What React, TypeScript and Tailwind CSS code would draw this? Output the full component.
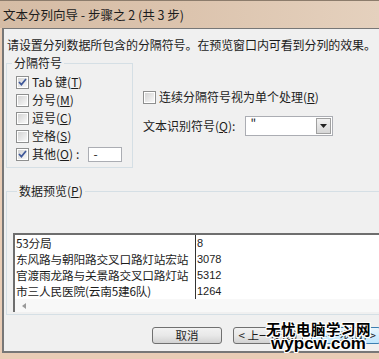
import React from "react";

const FONT = "font-['Noto_Sans_CJK_SC','Microsoft_YaHei',sans-serif]";

function Check({ on }: { on?: boolean }) {
  return (
    <span className="flex h-[13px] w-[13px] shrink-0 items-center justify-center border border-[#8e8f8f] bg-white p-[1px]">
      <span className="flex h-full w-full items-center justify-center bg-linear-to-br from-[#d4d4d4] to-[#f8f8f8]">
        {on && (
          <svg width="9" height="8" viewBox="0 0 9 8">
            <path d="M1 4 L3.4 6.6 L8 1" fill="none" stroke="#40599a" strokeWidth="1.7" />
          </svg>
        )}
      </span>
    </span>
  );
}

function Opt({ on, label, k, children }: { on?: boolean; label: string; k: string; children?: React.ReactNode }) {
  return (
    <div className="flex h-[18px] items-center gap-[3px]">
      <Check on={on} />
      <span className="whitespace-nowrap">
        {label}(<u>{k}</u>)
      </span>
      {children}
    </div>
  );
}

function Btn({ children, primary }: { children: React.ReactNode; primary?: boolean }) {
  return (
    <div
      className={
        "flex h-[17px] w-[70px] shrink-0 items-center justify-center whitespace-nowrap rounded-[3px] border text-[11.5px] leading-none " +
        (primary
          ? "border-[#3c7fb1] bg-linear-to-b from-[#eaf6fd] to-[#bee6fd]"
          : "border-[#707070] bg-linear-to-b from-[#f2f2f2] via-[#e8e8e8] to-[#d2d2d2]")
      }
    >
      {children}
    </div>
  );
}

const rows = [
  ["53分局", "8"],
  ["东风路与朝阳路交叉口路灯站宏站", "3078"],
  ["官渡雨龙路与关景路交叉口路灯站", "5312"],
  ["市三人民医院(云南5建6队)", "1264"],
];

export default function App() {
  return (
    <div className={"relative h-[359px] w-[379px] overflow-hidden bg-[#e9cdb6] text-[12px] leading-[16px] text-[#1c1c1c] " + FONT}>
      {/* title bar */}
      <div className="flex h-[28px] items-center whitespace-nowrap border-t border-[#8c7c6c] bg-linear-to-r from-[#d5bca5] via-[#dcc4ae] to-[#e5d1be] pl-[3px] text-[12.5px]">
        文本分列向导 - 步骤之 2 (共 3 步)
      </div>

      <div className="ml-[2px] h-[325px] border-l-2 border-t border-b-2 border-[#777] bg-[#f0f0f0]">
        <p className="pl-[3px] pt-[8px] whitespace-nowrap tracking-[-0.1px]">请设置分列数据所包含的分隔符号。在预览窗口内可看到分列的效果。</p>

        <div className="mt-[3px] flex">
          <fieldset className="ml-[2px] w-[127px] border border-[#d5dfe5] pb-[4px] pl-[9px] pt-[3px]">
            <legend className="ml-[-4px] px-[2px] leading-[14px]">分隔符号</legend>
            <Opt on label="Tab 键" k="T" />
            <Opt label="分号" k="M" />
            <Opt label="逗号" k="C" />
            <Opt label="空格" k="S" />
            <Opt on label="其他" k="O">
              <span>:</span>
              <span className="ml-[6px] flex h-[15px] w-[34px] items-center border border-[#abadb3] bg-white pl-[4px]">-</span>
            </Opt>
          </fieldset>

          <div className="ml-[10px]">
            <div className="mt-[32px]">
              <Opt label="连续分隔符号视为单个处理" k="R" />
            </div>
            <div className="mt-[10px] flex h-[20px] items-center">
              <span className="whitespace-nowrap">
                文本识别符号(<u>Q</u>):
              </span>
              <div className="ml-[10px] flex h-[20px] w-[88px] items-stretch border border-[#abadb3] bg-white">
                <span className="flex-1 pl-[4px] leading-[12px]">"</span>
                <span className="m-[1px] flex w-[15px] items-center justify-center border border-[#a0a0a0] bg-linear-to-b from-[#f2f2f2] to-[#d6d6d6]">
                  <svg width="7" height="4" viewBox="0 0 7 4">
                    <path d="M0 0 H7 L3.5 4 Z" fill="#222" />
                  </svg>
                </span>
              </div>
            </div>
          </div>
        </div>

        <fieldset className="ml-[2px] mt-[16px] w-[400px] border border-[#d5dfe5] pb-[2px] pl-[6px]">
          <legend className="ml-[4px] px-[2px] leading-[14px]">
            数据预览(<u>P</u>)
          </legend>
          <div className="mt-[35px] h-[79px] border-l-2 border-t-2 border-[#6e6e6e] bg-white text-[11.7px]">
            {rows.map(([a, b]) => (
              <div key={a} className="flex h-[16px] leading-[16px]">
                <span className="w-[181px] shrink-0 whitespace-nowrap border-r border-[#333] pl-[1px] tracking-[-0.2px]">{a}</span>
                <span className="pl-[1px] font-['Liberation_Sans',sans-serif] text-[11px]">{b}</span>
              </div>
            ))}
            <div className="flex h-[13px] items-center bg-[#f8f8f8] pl-[7px]">
              <svg width="4" height="6" viewBox="0 0 4 6">
                <path d="M4 0 V6 L0 3 Z" fill="#9a9a9a" />
              </svg>
            </div>
          </div>
        </fieldset>

        <div className="mt-[12px] flex gap-[11px] pl-[148px]">
          <Btn>取消</Btn>
          <Btn>&lt; 上一步(<u>B</u>)</Btn>
          <div className="-ml-[3px]">
            <Btn primary>下一步(<u>N</u>) &gt;</Btn>
          </div>
        </div>
      </div>

      {/* watermark */}
      <div className="absolute left-[266px] top-[321px] flex flex-col items-center whitespace-nowrap font-bold leading-[15px] text-black [text-shadow:-1px_-1px_0_#fff,1px_-1px_0_#fff,-1px_1px_0_#fff,1px_1px_0_#fff,0_1px_0_#fff,1px_0_0_#fff,-1px_0_0_#fff,0_-1px_0_#fff]">
        <span className="text-[14.5px] tracking-[0.5px]">无忧电脑学习网</span>
        <span className="font-['Liberation_Sans',sans-serif] text-[17px]">wypcw.com</span>
      </div>
    </div>
  );
}
